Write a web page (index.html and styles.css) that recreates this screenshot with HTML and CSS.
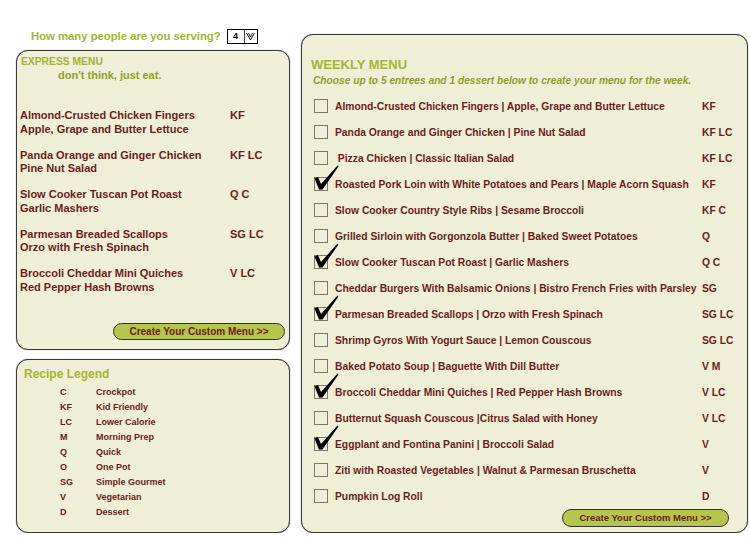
FILE: index.html
```html
<!DOCTYPE html>
<html>
<head>
<meta charset="utf-8">
<link rel="stylesheet" href="styles.css">
</head>
<body>
<div class="page">
  <div class="left">
    <div class="serving">
      <span>How many people are you serving?</span>
      <span class="select"><span class="sel-val">4</span><span class="sel-arrow"><svg width="9" height="9" viewBox="0 0 9 9"><path d="M0.5 1 L4.5 8 L8.5 1 M2.5 1 L4.5 5 L6.5 1" fill="none" stroke="#000" stroke-width="0.9"/></svg></span></span>
    </div>
    <div class="panel express">
      <div class="ex-title">EXPRESS MENU</div>
      <div class="ex-sub">don't think, just eat.</div>
      <div class="ex-list">
        <div class="ex-item"><div class="ex-name">Almond-Crusted Chicken Fingers<br>Apple, Grape and Butter Lettuce</div><div class="ex-code">KF</div></div>
        <div class="ex-item"><div class="ex-name">Panda Orange and Ginger Chicken<br>Pine Nut Salad</div><div class="ex-code">KF LC</div></div>
        <div class="ex-item"><div class="ex-name">Slow Cooker Tuscan Pot Roast<br>Garlic Mashers</div><div class="ex-code">Q C</div></div>
        <div class="ex-item"><div class="ex-name">Parmesan Breaded Scallops<br>Orzo with Fresh Spinach</div><div class="ex-code">SG LC</div></div>
        <div class="ex-item"><div class="ex-name">Broccoli Cheddar Mini Quiches<br>Red Pepper Hash Browns</div><div class="ex-code">V LC</div></div>
      </div>
      <div class="btn-row"><span class="btn">Create Your Custom Menu &gt;&gt;</span></div>
    </div>
    <div class="panel legend">
      <div class="lg-title">Recipe Legend</div>
      <div class="lg-list">
        <div class="lg-row"><span class="lg-code">C</span><span>Crockpot</span></div>
        <div class="lg-row"><span class="lg-code">KF</span><span>Kid Friendly</span></div>
        <div class="lg-row"><span class="lg-code">LC</span><span>Lower Calorie</span></div>
        <div class="lg-row"><span class="lg-code">M</span><span>Morning Prep</span></div>
        <div class="lg-row"><span class="lg-code">Q</span><span>Quick</span></div>
        <div class="lg-row"><span class="lg-code">O</span><span>One Pot</span></div>
        <div class="lg-row"><span class="lg-code">SG</span><span>Simple Gourmet</span></div>
        <div class="lg-row"><span class="lg-code">V</span><span>Vegetarian</span></div>
        <div class="lg-row"><span class="lg-code">D</span><span>Dessert</span></div>
      </div>
    </div>
  </div>
  <div class="panel weekly">
    <div class="wk-title">WEEKLY MENU</div>
    <div class="wk-sub">Choose up to 5 entrees and 1 dessert below to create your menu for the week.</div>
    <div class="wk-list">
      <div class="wk-row"><span class="box"></span><span class="wk-name">Almond-Crusted Chicken Fingers | Apple, Grape and Butter Lettuce</span><span class="wk-code">KF</span></div>
      <div class="wk-row"><span class="box"></span><span class="wk-name">Panda Orange and Ginger Chicken | Pine Nut Salad</span><span class="wk-code">KF LC</span></div>
      <div class="wk-row"><span class="box"></span><span class="wk-name">&nbsp;Pizza Chicken | Classic Italian Salad</span><span class="wk-code">KF LC</span></div>
      <div class="wk-row"><span class="box checked"><svg class="tick" width="26" height="26" viewBox="0 0 26 26"><path d="M0.5 13.5 L4 12 L7 19 L23.5 0.5 L24.5 1.5 L8.5 24.5 L5 24.5 Z" fill="#000"/></svg></span><span class="wk-name">Roasted Pork Loin with White Potatoes and Pears | Maple Acorn Squash</span><span class="wk-code">KF</span></div>
      <div class="wk-row"><span class="box"></span><span class="wk-name">Slow Cooker Country Style Ribs | Sesame Broccoli</span><span class="wk-code">KF C</span></div>
      <div class="wk-row"><span class="box"></span><span class="wk-name">Grilled Sirloin with Gorgonzola Butter | Baked Sweet Potatoes</span><span class="wk-code">Q</span></div>
      <div class="wk-row"><span class="box checked"><svg class="tick" width="26" height="26" viewBox="0 0 26 26"><path d="M0.5 13.5 L4 12 L7 19 L23.5 0.5 L24.5 1.5 L8.5 24.5 L5 24.5 Z" fill="#000"/></svg></span><span class="wk-name">Slow Cooker Tuscan Pot Roast | Garlic Mashers</span><span class="wk-code">Q C</span></div>
      <div class="wk-row"><span class="box"></span><span class="wk-name">Cheddar Burgers With Balsamic Onions | Bistro French Fries with Parsley</span><span class="wk-code">SG</span></div>
      <div class="wk-row"><span class="box checked"><svg class="tick" width="26" height="26" viewBox="0 0 26 26"><path d="M0.5 13.5 L4 12 L7 19 L23.5 0.5 L24.5 1.5 L8.5 24.5 L5 24.5 Z" fill="#000"/></svg></span><span class="wk-name">Parmesan Breaded Scallops | Orzo with Fresh Spinach</span><span class="wk-code">SG LC</span></div>
      <div class="wk-row"><span class="box"></span><span class="wk-name">Shrimp Gyros With Yogurt Sauce | Lemon Couscous</span><span class="wk-code">SG LC</span></div>
      <div class="wk-row"><span class="box"></span><span class="wk-name">Baked Potato Soup | Baguette With Dill Butter</span><span class="wk-code">V M</span></div>
      <div class="wk-row"><span class="box checked"><svg class="tick" width="26" height="26" viewBox="0 0 26 26"><path d="M0.5 13.5 L4 12 L7 19 L23.5 0.5 L24.5 1.5 L8.5 24.5 L5 24.5 Z" fill="#000"/></svg></span><span class="wk-name">Broccoli Cheddar Mini Quiches | Red Pepper Hash Browns</span><span class="wk-code">V LC</span></div>
      <div class="wk-row"><span class="box"></span><span class="wk-name">Butternut Squash Couscous |Citrus Salad with Honey</span><span class="wk-code">V LC</span></div>
      <div class="wk-row"><span class="box checked"><svg class="tick" width="26" height="26" viewBox="0 0 26 26"><path d="M0.5 13.5 L4 12 L7 19 L23.5 0.5 L24.5 1.5 L8.5 24.5 L5 24.5 Z" fill="#000"/></svg></span><span class="wk-name">Eggplant and Fontina Panini | Broccoli Salad</span><span class="wk-code">V</span></div>
      <div class="wk-row"><span class="box"></span><span class="wk-name">Ziti with Roasted Vegetables | Walnut &amp; Parmesan Bruschetta</span><span class="wk-code">V</span></div>
      <div class="wk-row"><span class="box"></span><span class="wk-name">Pumpkin Log Roll</span><span class="wk-code">D</span></div>
    </div>
    <div class="btn-row wk-btn"><span class="btn btn-wide">Create Your Custom Menu &gt;&gt;</span></div>
  </div>
</div>
</body>
</html>
```
FILE: styles.css
```css
html, body { margin: 0; padding: 0; background: #fff; }
body { font-family: "Liberation Sans", Arial, sans-serif; font-weight: bold; color: #6b1d1d; }
.page { display: flex; gap: 11px; padding-left: 16px; }
.left { width: 274px; display: flex; flex-direction: column; }
.serving { margin-top: 28px; height: 16px; display: flex; align-items: center; gap: 6px; padding-left: 15px; color: #a3b535; font-size: 11.3px; }
.select { display: flex; width: 29px; height: 13px; border: 1px solid #000; background: #fff; }
.sel-val { width: 16px; font-size: 9px; color: #000; text-align: center; line-height: 13px; border-right: 1px solid #444; }
.sel-arrow { flex: 1; display: flex; align-items: center; justify-content: center; }
.panel { background: #eeefd6; border: 1.5px solid #3a3a3a; border-radius: 12px; box-shadow: 0 0 1px #555; box-sizing: border-box; }
.express { margin-top: 6px; height: 300px; padding: 4px 4px 9px 3px; display: flex; flex-direction: column; }
.ex-title { color: #a3b535; font-size: 10.3px; line-height: 13px; padding-left: 1px; }
.ex-sub { color: #8f9f2a; font-size: 11px; line-height: 14px; padding-left: 38px; }
.ex-list { margin-top: 27px; display: flex; flex-direction: column; gap: 12.5px; }
.ex-item { display: flex; font-size: 11px; line-height: 13.5px; }
.ex-name { width: 210px; }
.btn-row { margin-top: auto; display: flex; justify-content: flex-end; }
.btn { width: 172px; height: 17px; box-sizing: border-box; border: 1px solid #333; border-radius: 9px; background: #b6c54b; color: #6b1d1d; font-size: 10px; text-align: center; line-height: 15px; }
.legend { margin-top: 9px; height: 174px; padding: 7px 6px 7px 7px; }
.lg-title { color: #a3b535; font-size: 12px; line-height: 14px; }
.lg-list { margin-top: 4px; padding-left: 36px; }
.lg-row { font-size: 9px; line-height: 15px; display: flex; }
.lg-code { width: 36px; }
.weekly { width: 447px; height: 499px; margin-top: 34px; padding: 22px 8px 4px 9px; display: flex; flex-direction: column; }
.wk-title { color: #a3b535; font-size: 13px; line-height: 16px; }
.wk-sub { color: #8f9f2a; font-size: 10.2px; font-style: italic; line-height: 12px; margin-top: 2px; padding-left: 2px; }
.wk-list { margin-top: 6px; display: flex; flex-direction: column; }
.wk-row { display: flex; align-items: center; height: 26px; font-size: 10.3px; }
.box { position: relative; width: 14px; height: 14px; box-sizing: border-box; border: 1.5px solid #7a7a6c; margin-left: 3px; margin-right: 7px; flex: none; }
.tick { position: absolute; left: -1px; top: -13px; }
.wk-name { width: 367px; flex: none; white-space: nowrap; }
.wk-code { flex: 1; white-space: nowrap; }
.wk-btn { margin-top: auto; padding-right: 10px; margin-bottom: 3px; }
.btn-wide { width: 167px; height: 18px; line-height: 16px; font-size: 9.5px; }
```
